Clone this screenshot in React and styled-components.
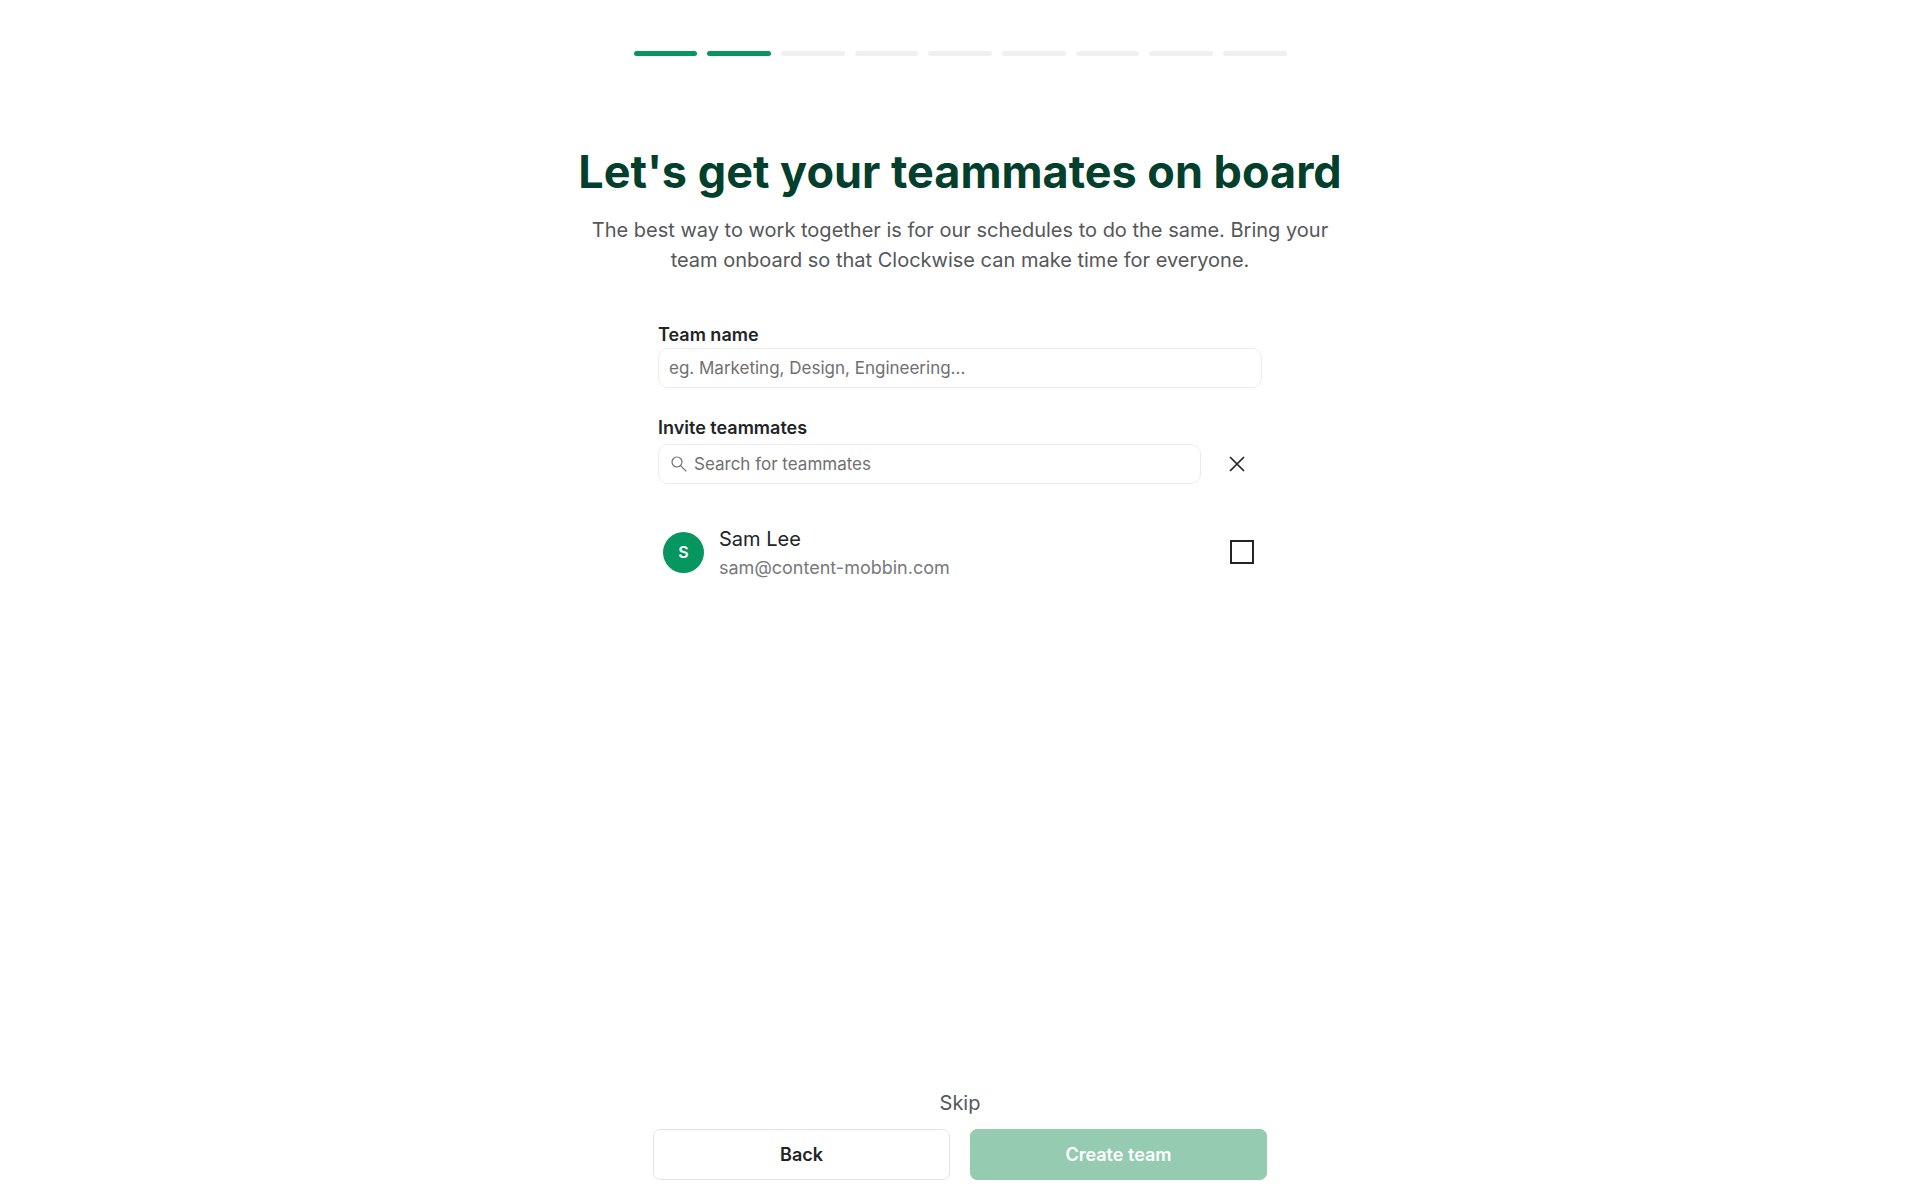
import { useState } from "react";
import styled, { createGlobalStyle } from "styled-components";

const GlobalStyle = createGlobalStyle`
  * {
    box-sizing: border-box;
  }
  body {
    margin: 0;
    background-color: #ffffff;
    color: #222426;
    font-family: Inter, "Liberation Sans", sans-serif;
  }
  button, input {
    font-family: inherit;
  }
`;

const Page = styled.div`
  display: flex;
  flex-direction: column;
  align-items: center;
  min-height: 100vh;
  padding: 51px 20px 20px;
`;

const Steps = styled.div`
  display: flex;
  gap: 10px;
  width: 100%;
  max-width: 653px;
`;

const Step = styled.div`
  flex: 1;
  height: 5px;
  border-radius: 3px;
  background-color: ${(props) => (props.$done ? "#06965f" : "#f0f0f0")};
`;

const Header = styled.header`
  max-width: 780px;
  margin-top: 86px;
  text-align: center;
`;

const Title = styled.h1`
  margin: 0;
  color: #023f2d;
  font-size: 45px;
  font-weight: 700;
  line-height: 60px;
`;

const Subtitle = styled.p`
  margin: 13px 0 0;
  color: #555759;
  font-size: 20px;
  line-height: 30px;
`;

const Form = styled.form`
  display: flex;
  flex-direction: column;
  flex: 1;
  width: 100%;
  max-width: 604px;
  margin-top: 48px;
`;

const Label = styled.label`
  font-size: 18px;
  font-weight: 600;
  line-height: 24px;
`;

const Field = styled.div`
  display: flex;
  align-items: center;
  flex: 1;
  gap: 7px;
  height: 40px;
  padding: 0 10px;
  border: 1px solid #ececec;
  border-radius: 10px;
`;

const FieldRow = styled.div`
  display: flex;
  align-items: center;
  margin: ${(props) => props.$margin};
`;

const Input = styled.input`
  flex: 1;
  min-width: 0;
  padding: 0;
  border: none;
  outline: none;
  background: none;
  color: #222426;
  font-size: 17px;
  &::placeholder {
    color: #707070;
    opacity: 1;
  }
`;

const CloseButton = styled.button`
  display: flex;
  margin: 0 17px 0 28px;
  padding: 0;
  border: none;
  background: none;
  color: #222426;
  cursor: pointer;
`;

const Teammate = styled.label`
  display: flex;
  align-items: center;
  padding: 0 8px 0 5px;
`;

const Avatar = styled.div`
  display: flex;
  align-items: center;
  justify-content: center;
  width: 41px;
  height: 41px;
  border-radius: 50%;
  background-color: #06965f;
  color: #ffffff;
  font-size: 16px;
  font-weight: 600;
`;

const TeammateData = styled.div`
  flex: 1;
  margin-left: 15px;
  padding-top: 2px;
`;

const TeammateName = styled.div`
  font-size: 20px;
  line-height: 30px;
`;

const TeammateEmail = styled.div`
  color: #77797b;
  font-size: 18px;
  line-height: 28px;
`;

const Checkbox = styled.input`
  appearance: none;
  width: 24px;
  height: 24px;
  margin: 0;
  border: 2px solid #222426;
  cursor: pointer;
  &:checked {
    background-color: #06965f;
  }
`;

const Footer = styled.footer`
  display: flex;
  flex-direction: column;
  align-items: center;
  gap: 10px;
  width: 100%;
  max-width: 614px;
`;

const SkipButton = styled.button`
  padding: 0;
  border: none;
  background: none;
  color: #555759;
  font-size: 20px;
  line-height: 32px;
  cursor: pointer;
`;

const Actions = styled.div`
  display: flex;
  gap: 20px;
  width: 100%;
`;

const Button = styled.button`
  flex: 1;
  height: 51px;
  border: 1px solid ${(props) => (props.$primary ? "#95cbb0" : "#e4e4e4")};
  border-radius: 7px;
  background-color: ${(props) => (props.$primary ? "#95cbb0" : "#ffffff")};
  color: ${(props) => (props.$primary ? "#ffffff" : "#222426")};
  font-size: 18px;
  font-weight: 600;
`;

const STEP_COUNT = 9;
const CURRENT_STEP = 2;

const teammates = [{ name: "Sam Lee", email: "sam@content-mobbin.com" }];

function SearchIcon() {
  return (
    <svg width="18" height="18" viewBox="0 0 18 18" fill="none" stroke="#707070" strokeWidth="1.2" aria-hidden="true">
      <circle cx="8" cy="7" r="5" />
      <path d="M11.6 10.6 L17.3 16.3" />
    </svg>
  );
}

function CloseIcon() {
  return (
    <svg width="16" height="16" viewBox="0 0 16 16" stroke="currentColor" strokeWidth="1.7" aria-hidden="true">
      <path d="M1 1 L15 15 M15 1 L1 15" />
    </svg>
  );
}

function App() {
  const [teamName, setTeamName] = useState("");
  const [search, setSearch] = useState("");

  return (
    <>
      <GlobalStyle />
      <Page>
        <Steps>
          {Array.from({ length: STEP_COUNT }, (_, index) => (
            <Step key={index} $done={index < CURRENT_STEP} />
          ))}
        </Steps>
        <Header>
          <Title>Let's get your teammates on board</Title>
          <Subtitle>
            The best way to work together is for our schedules to do the same. Bring your team onboard so that
            Clockwise can make time for everyone.
          </Subtitle>
        </Header>
        <Form onSubmit={(e) => e.preventDefault()}>
          <Label htmlFor="team-name">Team name</Label>
          <FieldRow $margin="1px 0 28px">
            <Field>
              <Input
                id="team-name"
                placeholder="eg. Marketing, Design, Engineering..."
                value={teamName}
                onChange={(e) => setTeamName(e.target.value)}
              />
            </Field>
          </FieldRow>
          <Label htmlFor="search">Invite teammates</Label>
          <FieldRow $margin="4px 0 38px">
            <Field>
              <SearchIcon />
              <Input
                id="search"
                placeholder="Search for teammates"
                value={search}
                onChange={(e) => setSearch(e.target.value)}
              />
            </Field>
            <CloseButton type="button" aria-label="Clear search" onClick={() => setSearch("")}>
              <CloseIcon />
            </CloseButton>
          </FieldRow>
          {teammates.map((teammate) => (
            <Teammate key={teammate.email}>
              <Avatar>{teammate.name[0]}</Avatar>
              <TeammateData>
                <TeammateName>{teammate.name}</TeammateName>
                <TeammateEmail>{teammate.email}</TeammateEmail>
              </TeammateData>
              <Checkbox type="checkbox" />
            </Teammate>
          ))}
        </Form>
        <Footer>
          <SkipButton type="button">Skip</SkipButton>
          <Actions>
            <Button type="button">Back</Button>
            <Button type="button" $primary>
              Create team
            </Button>
          </Actions>
        </Footer>
      </Page>
    </>
  );
}

export default App;
